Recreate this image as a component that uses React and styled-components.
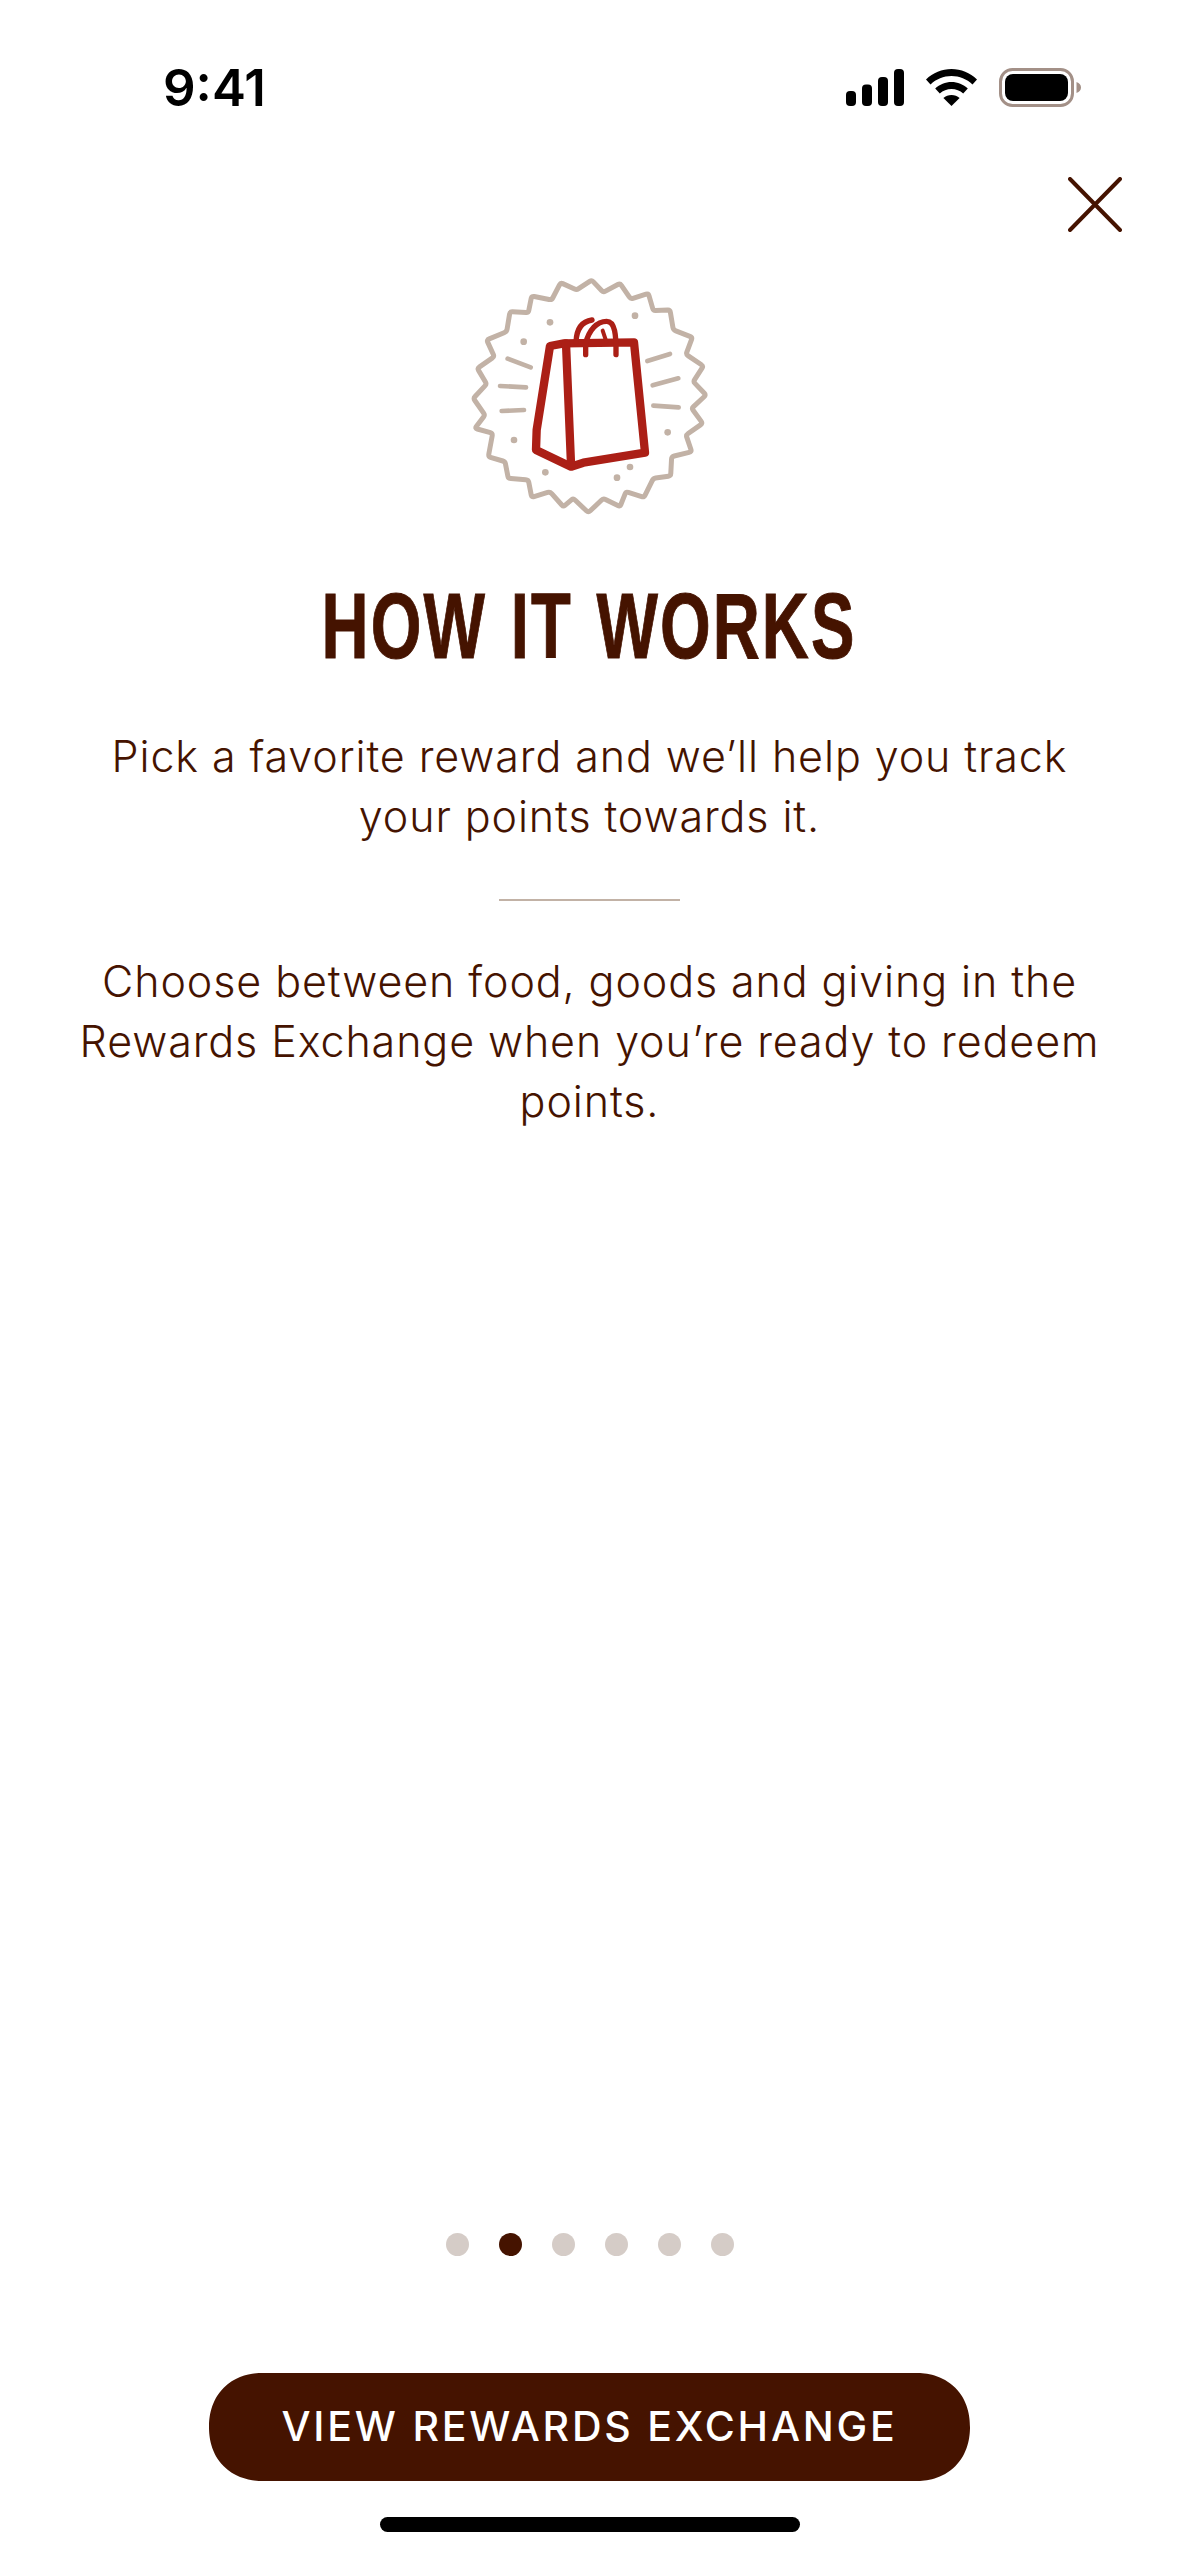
import React from 'react';
import styled, { createGlobalStyle } from 'styled-components';

const BROWN = '#451300';
const TAN = '#c2b2a6';
const RED = '#ab1f16';

const GlobalStyle = createGlobalStyle`
  html, body { margin: 0; padding: 0; background: #fff; }
`;

const Page = styled.div`
  width: 1179px;
  height: 2556px;
  display: flex;
  flex-direction: column;
  align-items: center;
  background: #fff;
  color: ${BROWN};
  font-family: Inter, "Liberation Sans", sans-serif;
  overflow: hidden;
`;

const StatusBar = styled.div`
  align-self: stretch;
  height: 130px;
  box-sizing: border-box;
  padding: 60px 98px 0 163px;
  display: flex;
  justify-content: space-between;
  align-items: flex-start;
`;

const Time = styled.span`
  font-size: 51px;
  line-height: 56px;
  font-weight: 600;
  color: #000;
`;

const StatusIcons = styled.div`
  display: flex;
  align-items: center;
  gap: 22px;
  margin-top: 8px;
`;

const CloseRow = styled.div`
  align-self: stretch;
  display: flex;
  justify-content: flex-end;
  padding: 47px 57px 0 0;
`;

const CloseButton = styled.button`
  width: 54px;
  height: 55px;
  padding: 0;
  border: 0;
  background: none;
  display: block;
`;

const Badge = styled.svg`
  display: block;
  margin-top: 28px;
  flex: none;
`;

const Heading = styled.h1`
  margin: 56px 0 0;
  font-family: "Liberation Sans", sans-serif;
  font-size: 93px;
  line-height: 100px;
  font-weight: 700;
  letter-spacing: 3px;
  word-spacing: 5px;
  white-space: nowrap;
  transform: scaleX(0.7);
  -webkit-text-stroke: 1px ${BROWN};
`;

const Copy = styled.p`
  margin: ${p => p.$top}px 0 0;
  font-size: 43px;
  line-height: 60px;
  font-weight: 300;
  letter-spacing: 0.9px;
  text-align: center;
  white-space: nowrap;
`;

const Divider = styled.div`
  width: 181px;
  height: 2px;
  margin-top: 53px;
  background: ${TAN};
`;

const Dots = styled.div`
  margin-top: auto;
  display: flex;
  gap: 30px;
`;

const Dot = styled.span`
  width: 23px;
  height: 23px;
  border-radius: 50%;
  background: ${p => (p.$active ? BROWN : '#d5ccc7')};
`;

const CtaButton = styled.button`
  width: 761px;
  height: 108px;
  margin-top: 117px;
  padding: 0 0 3px;
  border: 0;
  border-radius: 54px;
  corner-shape: superellipse(1.12);
  background: ${BROWN};
  color: #fff;
  font-family: inherit;
  font-size: 41px;
  font-weight: 500;
  letter-spacing: 2.8px;
`;

const HomeBar = styled.div`
  width: 420px;
  height: 15px;
  margin: 36px 0 24px;
  border-radius: 8px;
  background: #000;
`;

const burst = [
  [455, 60], [490, 97], [540, 70], [572, 117], [625, 100], [640, 152], [690, 150], [700, 210],
  [757, 232], [738, 283], [790, 318], [760, 365], [798, 405], [755, 445], [788, 490], [738, 525],
  [755, 575], [695, 590], [692, 648], [640, 655], [612, 712], [558, 695], [540, 740], [490, 715],
  [445, 758], [400, 715], [370, 740], [330, 695], [275, 712], [265, 660], [205, 655], [195, 605],
  [145, 590], [158, 520], [105, 505], [135, 465], [100, 415], [140, 372], [112, 325], [163, 290],
  [140, 240], [200, 215], [210, 155], [265, 158], [275, 108], [335, 120], [362, 68], [410, 90],
];

// soften each corner of the burst, the drawing is hand inked
const softPath = (pts, t = 0.13) => {
  const mix = (a, b, k) => [a[0] + (b[0] - a[0]) * k, a[1] + (b[1] - a[1]) * k];
  let d = '';
  pts.forEach((p, i) => {
    const prev = pts[(i - 1 + pts.length) % pts.length];
    const next = pts[(i + 1) % pts.length];
    const a = mix(p, prev, t);
    const b = mix(p, next, t);
    d += `${i === 0 ? 'M' : 'L'}${a[0]} ${a[1]} Q${p[0]} ${p[1]} ${b[0]} ${b[1]} `;
  });
  return d + 'Z';
};

const rays = [
  'M203 296 L272 322',
  'M180 378 L258 382',
  'M185 453 L252 450',
  'M622 303 L690 282',
  'M638 376 L715 355',
  'M640 437 L716 442',
];

const specks = [
  [330, 187], [585, 167], [251, 245], [222, 540],
  [683, 517], [316, 637], [570, 621], [531, 653],
];

function BagBadge() {
  return (
    <Badge width="300" height="260" viewBox="0 0 900 780" fill="none" strokeLinecap="round" strokeLinejoin="round">
      <path d={softPath(burst)} stroke={TAN} strokeWidth="15" />
      {rays.map(d => <path key={d} d={d} stroke={TAN} strokeWidth="14" />)}
      {specks.map(([x, y]) => <circle key={x} cx={x} cy={y} r="10" fill={TAN} />)}
      <path d="M330 258 L372 250 L582 247 L615 578 L430 608 L393 620 L288 570 L290 510 Z" stroke={RED} strokeWidth="25" />
      <path d="M378 250 L393 612" stroke={RED} strokeWidth="25" />
      <path d="M408 245 C410 205 428 184 456 180" stroke={RED} strokeWidth="16" />
      <path d="M437 284 L437 250 C447 210 470 184 500 184 C525 184 529 225 528 284" stroke={RED} strokeWidth="16" />
      <path d="M488 212 L499 245" stroke={RED} strokeWidth="12" />
    </Badge>
  );
}

function StatusGlyphs() {
  return (
    <StatusIcons>
      <svg width="58" height="37" viewBox="0 0 58 37" fill="#000">
        <rect x="0" y="22" width="10" height="15" rx="4" />
        <rect x="16" y="15.5" width="10" height="21.5" rx="4" />
        <rect x="32" y="8" width="10" height="29" rx="4" />
        <rect x="48" y="0" width="10" height="37" rx="4" />
      </svg>
      <svg width="51" height="37" viewBox="0 0 51 37" fill="#000">
        <path d="M25.5 0 C35 0 44 3.8 51 10.5 L46.5 15.5 C40.8 10 33.4 7 25.5 7 C17.6 7 10.2 10 4.5 15.5 L0 10.5 C7 3.8 16 0 25.5 0 Z" />
        <path d="M25.5 13 C31.6 13 37.4 15.4 41.8 19.6 L37.2 24.6 C34 21.6 29.9 20 25.5 20 C21.1 20 17 21.6 13.8 24.6 L9.2 19.6 C13.6 15.4 19.4 13 25.5 13 Z" />
        <path d="M25.5 26 C28.6 26 31.4 27.1 33.6 29 L25.5 37 L17.4 29 C19.6 27.1 22.4 26 25.5 26 Z" />
      </svg>
      <svg width="82" height="39" viewBox="0 0 82 39">
        <rect x="1.5" y="1.5" width="72" height="36" rx="12" fill="none" stroke="#a39087" strokeWidth="3" />
        <rect x="6" y="6" width="63" height="27" rx="8" fill="#000" />
        <path d="M77.5 14 C80.5 15 82 17 82 19.5 C82 22 80.5 24 77.5 25 Z" fill="#a39087" />
      </svg>
    </StatusIcons>
  );
}

export default function App() {
  return (
    <Page>
      <GlobalStyle />
      <StatusBar>
        <Time>9:41</Time>
        <StatusGlyphs />
      </StatusBar>
      <CloseRow>
        <CloseButton aria-label="Close">
          <svg width="54" height="55" viewBox="0 0 54 55" fill="none" stroke={BROWN} strokeWidth="4" strokeLinecap="round">
            <path d="M2 2 L52 53 M52 2 L2 53" />
          </svg>
        </CloseButton>
      </CloseRow>
      <BagBadge />
      <Heading>HOW IT WORKS</Heading>
      <Copy $top={50}>
        Pick a favorite reward and we’ll help you track<br />
        your points towards it.
      </Copy>
      <Divider />
      <Copy $top={50}>
        Choose between food, goods and giving in the<br />
        Rewards Exchange when you’re ready to redeem<br />
        points.
      </Copy>
      <Dots>
        {[0, 1, 2, 3, 4, 5].map(i => <Dot key={i} $active={i === 1} />)}
      </Dots>
      <CtaButton>VIEW REWARDS EXCHANGE</CtaButton>
      <HomeBar />
    </Page>
  );
}
